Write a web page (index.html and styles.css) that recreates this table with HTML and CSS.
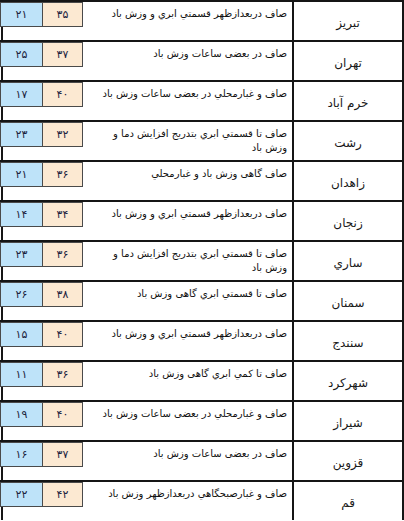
FILE: index.html
```html
<!DOCTYPE html>
<html lang="fa">
<head>
<meta charset="utf-8">
<link rel="stylesheet" href="styles.css">
</head>
<body>
<div class="table">
  <div class="row"><div class="main"><div class="min">۲۱</div><div class="max">۳۵</div><div class="desc">صاف دربعدازظهر قسمتي ابري و وزش باد</div></div><div class="city">تبریز</div></div>
  <div class="row"><div class="main"><div class="min">۲۵</div><div class="max">۳۷</div><div class="desc">صاف در بعضی ساعات وزش باد</div></div><div class="city">تهران</div></div>
  <div class="row"><div class="main"><div class="min">۱۷</div><div class="max">۴۰</div><div class="desc">صاف و غبارمحلي در بعضی ساعات وزش باد</div></div><div class="city">خرم آباد</div></div>
  <div class="row"><div class="main"><div class="min">۲۳</div><div class="max">۳۲</div><div class="desc">صاف تا قسمتي ابري بتدريج افزايش دما و وزش باد</div></div><div class="city">رشت</div></div>
  <div class="row"><div class="main"><div class="min">۲۱</div><div class="max">۳۶</div><div class="desc">صاف گاهی وزش باد و غبارمحلي</div></div><div class="city">زاهدان</div></div>
  <div class="row"><div class="main"><div class="min">۱۴</div><div class="max">۳۴</div><div class="desc">صاف دربعدازظهر قسمتي ابري و وزش باد</div></div><div class="city">زنجان</div></div>
  <div class="row"><div class="main"><div class="min">۲۳</div><div class="max">۳۶</div><div class="desc">صاف تا قسمتي ابري بتدريج افزايش دما و وزش باد</div></div><div class="city">ساري</div></div>
  <div class="row"><div class="main"><div class="min">۲۶</div><div class="max">۳۸</div><div class="desc">صاف تا قسمتي ابري گاهی وزش باد</div></div><div class="city">سمنان</div></div>
  <div class="row"><div class="main"><div class="min">۱۵</div><div class="max">۴۰</div><div class="desc">صاف دربعدازظهر قسمتي ابري و وزش باد</div></div><div class="city">سنندج</div></div>
  <div class="row"><div class="main"><div class="min">۱۱</div><div class="max">۳۶</div><div class="desc">صاف تا کمي ابري گاهی وزش باد</div></div><div class="city">شهرکرد</div></div>
  <div class="row"><div class="main"><div class="min">۱۹</div><div class="max">۴۰</div><div class="desc">صاف و غبارمحلي در بعضی ساعات وزش باد</div></div><div class="city">شيراز</div></div>
  <div class="row"><div class="main"><div class="min">۱۶</div><div class="max">۳۷</div><div class="desc">صاف در بعضی ساعات وزش باد</div></div><div class="city">قزوين</div></div>
  <div class="row"><div class="main"><div class="min">۲۲</div><div class="max">۴۲</div><div class="desc">صاف و غبارصبحگاهي دربعدازظهر وزش باد</div></div><div class="city">قم</div></div>
</div>
</body>
</html>
```
FILE: styles.css
```css
html, body {
  margin: 0;
  padding: 0;
  background: #ffffff;
}
body {
  font-family: "DejaVu Sans", sans-serif;
  color: #111;
  width: 404px;
  height: 521px;
  overflow: hidden;
}
.table {
  width: 404px;
}
.row {
  display: grid;
  grid-template-columns: 292px 112px;
  height: 38px;
  border-top: 2px solid #151515;
}
.main {
  display: flex;
  align-items: flex-start;
  margin-left: 1px;
  border-left: 2px solid #151515;
  min-width: 0;
}
.min, .max {
  box-sizing: border-box;
  height: 25px;
  display: flex;
  align-items: center;
  justify-content: center;
  font-size: 11px;
  color: #1c2340;
  border: 1px solid #4a4a4a;
  flex: none;
}
.min {
  width: 43px;
  margin-left: -3px;
  background: #bee3f9;
}
.max {
  width: 40px;
  border-left: none;
  background: #fce9d2;
}
.desc {
  flex: 1;
  min-width: 0;
  direction: rtl;
  text-align: right;
  font-size: 10px;
  line-height: 14px;
  padding: 5px 5px 0 6px;
  color: #111;
}
.city {
  box-sizing: border-box;
  border-left: 2px solid #151515;
  border-right: 2px solid #151515;
  display: flex;
  align-items: center;
  justify-content: center;
  direction: rtl;
  font-size: 12px;
  padding-top: 4px;
  color: #1a1a1a;
}
```
